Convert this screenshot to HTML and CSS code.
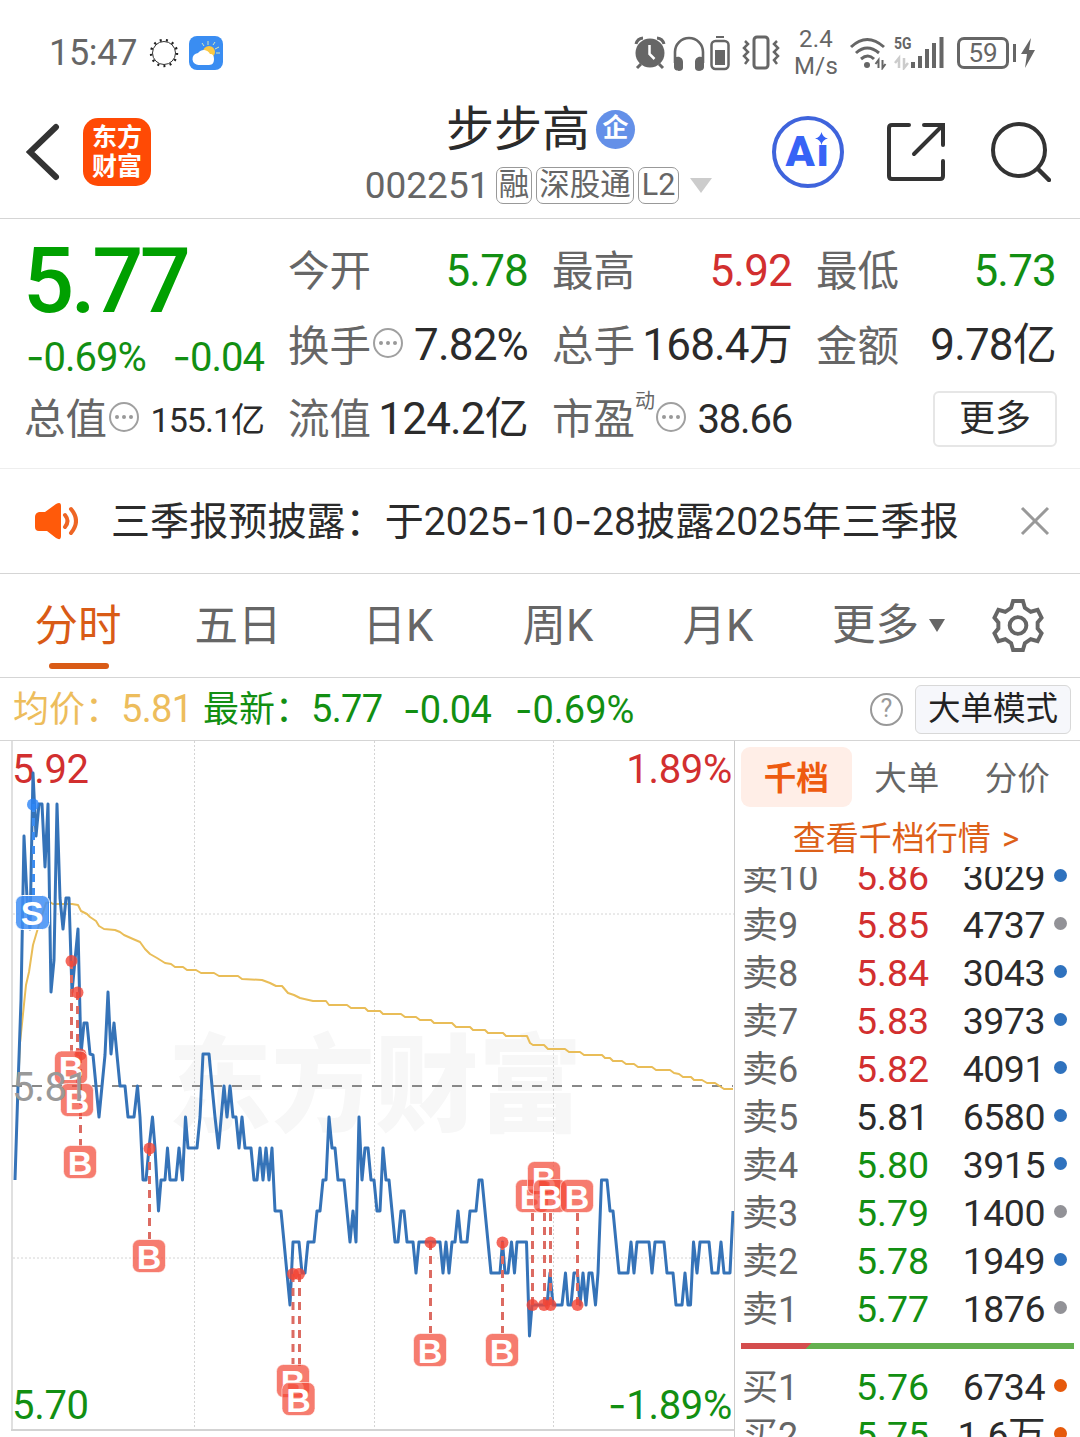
FILE: index.html
```
<!DOCTYPE html>
<html lang="zh-CN">
<head>
    <meta charset="UTF-8">
    <meta name="viewport" content="width=device-width, initial-scale=1.0">
    <title>步步高 002251</title>
    <link rel="stylesheet" href="styles.css">
</head>
<body>
    <div class="status-bar">
        <span class="time">15:47</span>
        <svg class="ring" viewBox="0 0 30 30"><circle cx="15" cy="15" r="11.5" fill="none" stroke="#333" stroke-width="1"/><circle cx="15" cy="15" r="13" fill="none" stroke="#222" stroke-width="2.4" stroke-dasharray="2 4.28"/></svg>
        <svg class="weather" viewBox="0 0 34 34">
            <rect width="34" height="34" rx="8" fill="#3a8df2"/>
            <path d="M19 5v4M13 7l2 3M26 6l-2 3M30 11l-4 2M31 17h-4" stroke="#d8e6b5" stroke-width="1"/>
            <circle cx="20" cy="16" r="6" fill="#fbc944"/>
            <path d="M10 29a6 6 0 0 1-1-12 7 7 0 0 1 12 1c3 0 4 2 4 5s-1 6-5 6z" fill="#fff"/>
        </svg>
        <div class="status-icons">
            <svg class="alarm" viewBox="0 0 32 34"><circle cx="16" cy="17" r="14.5" fill="#666"/><path d="M2 8a8 8 0 0 1 7-6M30 8a8 8 0 0 0-7-6M7 28l-4 4M25 28l4 4" stroke="#666" stroke-width="3" fill="none"/><path d="M15.5 9v9l5 5" stroke="#fff" stroke-width="2.5" fill="none"/></svg>
            <svg class="headphones" viewBox="0 0 32 36"><path d="M2 27V16a14 14 0 0 1 28 0v11" fill="none" stroke="#666" stroke-width="2.6"/><path d="M1 22c5-3 9 0 9 4v6c0 4-9 4-9-1zM31 22c-5-3-9 0-9 4v6c0 4 9 4 9-1z" fill="#666"/></svg>
            <svg class="device" viewBox="0 0 20 36"><path d="M6 1h8v2H6z" fill="#666"/><rect x="1.5" y="6" width="17" height="28" rx="4" fill="none" stroke="#666" stroke-width="2.5"/><rect x="5" y="15" width="10" height="15" fill="#666"/></svg>
            <svg class="vibrate" viewBox="0 0 38 36"><rect x="12" y="2" width="14" height="31" rx="3" fill="none" stroke="#666" stroke-width="3"/><path d="M3 6l3 3-4 4 4 4-4 4 4 4-3 4M35 6l-3 3 4 4-4 4 4 4-4 4 3 4" fill="none" stroke="#666" stroke-width="2.5"/></svg>
            <div class="speed"><span>2.4</span><span>M/s</span></div>
            <svg class="wifi" viewBox="0 0 38 34"><path d="M2 11q16-15 33 0M7 17q11-10 23 0M12 23q7-6 13 0" fill="none" stroke="#666" stroke-width="3"/><circle cx="18" cy="29" r="3" fill="#666"/><path d="M29.5 32v-8l-3 4M33.5 24v8l3-4" fill="none" stroke="#666" stroke-width="2"/></svg>
            <div class="network">
                <span>5G</span>
                <svg viewBox="0 0 52 34"><path d="M5 32v-10l-4 5M10 22v10l4-5" fill="none" stroke="#ccc" stroke-width="2.5"/><path d="M19 32v-6M26 32V20M33 32V13M40 32V7M47.5 32V1" stroke="#666" stroke-width="4"/></svg>
            </div>
            <div class="battery">59</div>
            <svg class="charging" viewBox="0 0 22 32"><path d="M1.5 7v18" stroke="#666" stroke-width="3"/><path d="M18 1L8 17h6l-2 14 10-18h-6z" fill="#666"/></svg>
        </div>
    </div>

    <header class="header">
        <div class="header-left">
            <svg class="back" viewBox="0 0 34 58"><path d="M30 4L4 29l26 25" fill="none" stroke="#333" stroke-width="6" stroke-linecap="round"/></svg>
            <div class="logo"><span>东方</span><span>财富</span></div>
        </div>
        <div class="header-title">
            <div class="stock-name">步步高<i class="badge">企</i></div>
            <div class="stock-code">
                <span class="code">002251</span>
                <span class="tag">融</span>
                <span class="tag">深股通</span>
                <span class="tag">L2</span>
                <i class="triangle"></i>
            </div>
        </div>
        <div class="header-right">
            <div class="ai"><b>Ai</b><svg viewBox="0 0 12 12"><path d="M6 0q1 5 6 6-5 1-6 6-1-5-6-6 5-1 6-6z" fill="#3763f6"/></svg></div>
            <svg class="share" viewBox="0 0 60 60"><path d="M23 3H6Q3 3 3 6v48q0 3 3 3h48q3 0 3-3V39M38 3h19v20M57 3L28 32" fill="none" stroke="#333" stroke-width="4" stroke-linecap="round"/></svg>
            <svg class="search" viewBox="0 0 60 60"><circle cx="28" cy="28" r="26" fill="none" stroke="#333" stroke-width="4"/><path d="M47 47l11 11" stroke="#333" stroke-width="4.5" stroke-linecap="round"/></svg>
        </div>
    </header>

    <section class="stats">
        <div class="price">
            <strong>5.77</strong>
            <div class="change green"><span><u>-</u>0.69%</span><span><u>-</u>0.04</span></div>
        </div>
        <div class="stat"><label>今开</label><span class="green">5.78</span></div>
        <div class="stat"><label>最高</label><span class="red">5.92</span></div>
        <div class="stat"><label>最低</label><span class="green">5.73</span></div>
        <div class="stat"><label>换手</label><i class="dots"></i><span>7.82%</span></div>
        <div class="stat"><label>总手</label><span>168.4万</span></div>
        <div class="stat"><label>金额</label><span>9.78亿</span></div>
        <div class="stat"><label>总值</label><i class="dots"></i><span class="small">155.1亿</span></div>
        <div class="stat"><label>流值</label><span>124.2亿</span></div>
        <div class="stat"><label>市盈</label><sup>动</sup><i class="dots"></i><span class="medium">38.66</span></div>
        <div class="stat"><button class="more">更多</button></div>
    </section>

    <div class="notice">
        <svg class="speaker" viewBox="0 0 44 38"><path d="M1 15q0-4 4-5h6L22 2q5-3 5 2v30q0 5-5 2l-9-7H5q-4 0-4-4z" fill="#ff5a0a"/><path d="M31 13q5 6 0 12M37 7q10 12 0 24" fill="none" stroke="#ee6524" stroke-width="4" stroke-linecap="round"/></svg>
        <span class="notice-text">三季报预披露：于2025<u>-</u>10<u>-</u>28披露2025年三季报</span>
        <svg class="close" viewBox="0 0 30 30"><path d="M2 2l26 26M28 2L2 28" stroke="#999" stroke-width="3"/></svg>
    </div>

    <nav class="tabs">
        <a class="tab active">分时</a>
        <a class="tab">五日</a>
        <a class="tab">日K</a>
        <a class="tab">周K</a>
        <a class="tab">月K</a>
        <a class="tab-more">更多<i></i></a>
        <svg class="gear" viewBox="0 0 52 54"><path d="M21 2h10l2 7 6 4 7-2 4 8-4 5v6l4 5-4 8-7-2-6 4-2 7H21l-2-7-6-4-7 2-4-8 4-5v-6l-4-5 4-8 7 2 6-4z" fill="none" stroke="#666" stroke-width="4"/><circle cx="26" cy="27" r="8.5" fill="none" stroke="#666" stroke-width="4"/></svg>
    </nav>

    <div class="quote">
        <span class="quote-avg">均价：<b>5.81</b></span>
        <span class="quote-last green">最新：<b>5.77</b></span>
        <b class="quote-diff green"><u>-</u>0.04</b>
        <b class="quote-pct green"><u>-</u>0.69%</b>
        <i class="help">?</i>
        <button class="mode">大单模式</button>
    </div>

    <main class="main">
        <svg class="chart" viewBox="0 741 734 696">
            <defs>
                <g id="buy">
                    <rect x="-16.5" y="-16.5" width="33" height="33" rx="7" class="buy-box"/>
                    <text y="12.5" class="mark">B</text>
                </g>
            </defs>
            <text x="168" y="1123" textLength="414" lengthAdjust="spacingAndGlyphs" class="watermark">东方财富</text>
            <path d="M194.5 741V1430M374.5 741V1430M553.5 741V1430M13 914H734M13 1258H734" class="grid"/>
            <path d="M12 741V1430" stroke="#e0e0e0" stroke-width="2"/>
            <path d="M11 1430H734" stroke="#d3d3d3" stroke-width="2"/>
            <path d="M12 1086H733" stroke="#888" stroke-width="2" stroke-dasharray="10 10"/>
            <text x="12" y="783" class="axis" fill="#d22f2f">5.92</text>
            <text x="732" y="783" class="axis end" fill="#d22f2f">1.89%</text>
            <text x="12" y="1419" class="axis" fill="#128f12">5.70</text>
            <text x="732" y="1419" class="axis end" fill="#128f12"><tspan class="minus">-</tspan>1.89%</text>
            <polyline class="avg-line" points="18,1090 20,1043 26,985 29,972 33,945 38,928 46,903 50,902 53,904 72,904 78,905 81,911 87,914 90,917 96,921 99,926 104,929 115,930 120,932 124,935 133,939 140,942 145,949 150,954 157,958 165,963 171,964 175,967 183,967 187,970 196,970 201,973 214,973 219,976 238,976 242,979 262,980 270,983 276,986 282,986 288,993 294,995 300,998 313,1001 326,1001 329,1005 347,1005 351,1008 365,1008 368,1011 380,1011 383,1014 401,1014 405,1017 416,1017 420,1020 431,1020 434,1023 452,1023 456,1027 470,1027 473,1030 485,1030 488,1033 503,1033 506,1036 527,1036 530,1043 533,1045 544,1045 548,1049 565,1049 569,1052 580,1052 584,1055 602,1055 605,1058 610,1058 613,1061 622,1061 626,1064 634,1064 638,1067 652,1067 656,1070 670,1070 674,1073 679,1074 683,1077 691,1077 694,1080 702,1080 707,1083 715,1083 724,1089 733,1089"/>
            <polyline class="price-line" points="15,1180 18,1086 21,1000 24,836 27,898 30,929 33,773 36,836 39,804 42,804 45,867 48,804 51,992 54,960 57,804 60,898 63,929 66,898 69,898 72,992 75,960 78,929 81,1054 84,1023 87,1023 90,1054 93,1055 96,1086 99,1117 102,1086 105,1055 108,992 111,1054 114,1023 117,1055 120,1086 125,1086 128,1117 134,1117 137.5,1086 140,1117 143,1180 146,1180 149,1148 152.5,1117 155,1148 158.5,1211 161,1180 165,1180 167.5,1148 170,1180 176,1180 179,1148 182.5,1180 185.5,1117 188,1148 197,1148 200,1117 203,1054 209,1054 212,1086 215,1117 218.5,1148 224,1086 227,1117 230,1086 233,1117 236,1117 239,1148 242,1117 245,1148 251,1148 254,1180 257,1180 260,1148 263,1180 266,1148 269,1180 272,1148 275,1211 281,1211 284,1242 290,1305 293,1242 299,1242 302,1273 305,1273 308,1242 314,1242 317,1211 320,1211 323,1180 326,1180 329,1117 332,1148 335,1148 338,1180 344,1180 347,1211 350,1242 353,1211 356,1242 359,1117 362,1180 365,1148 368,1148 371,1180 374,1180 377,1211 380,1211 383,1148 386,1180 389,1180 392,1211 395,1242 398,1242 401,1211 404,1211 407,1242 413,1242 416,1273 419,1242 440,1242 443,1273 446,1242 449,1273 452,1242 455,1242 458,1211 461,1242 467,1242 470,1211 476,1211 479,1180 482,1180 485,1211 488,1242 491,1273 500,1273 502.5,1242 505,1273 508,1273 511.5,1242 514.5,1273 517,1242 526.5,1242 529.5,1336 532,1305 547,1305 550,1273 553,1305 562,1305 565.5,1273 568,1305 571,1305 574,1273 577.5,1273 580,1305 583,1273 586,1305 589,1273 592,1273 595.5,1305 598,1273 601.5,1180 607,1180 610,1211 613,1211 616,1242 619,1273 628,1273 631,1242 634,1273 637,1242 649,1242 652,1273 655,1242 664,1242 667,1273 673,1273 676,1305 682,1305 685,1273 688,1305 690.5,1305 693.5,1242 697,1273 700,1242 709,1242 712,1273 718,1273 721,1242 724,1273 730,1273 733,1211"/>
            <!-- trade markers -->
            <path d="M33.5 804V896" stroke="#3b8cf0" stroke-width="3" stroke-dasharray="8 6"/>
            <circle cx="33" cy="804.5" r="6" fill="#2b83f6" fill-opacity=".8"/>
            <rect x="15.5" y="895.5" width="34" height="34" rx="7" fill="#3f8ef5" fill-opacity=".85" stroke="#fff"/>
            <text x="32" y="925" class="mark">S</text>
            <path class="buy-link" d="M71.5 961V1052M77.5 992V1083M80.5 1055V1146M149.5 1148V1239M293 1274V1364M299.5 1274V1382M430.5 1242V1333M502.5 1242V1333M532.5 1305V1212M544.5 1305V1212M550.5 1305V1212M577.5 1305V1212"/>
            <g class="buy-dots">
                <circle cx="71.5" cy="961" r="6"/>
                <circle cx="77.5" cy="992.5" r="6"/>
                <circle cx="80.5" cy="1054.5" r="6"/>
                <circle cx="149.5" cy="1148.5" r="6"/>
                <circle cx="293" cy="1274" r="6"/>
                <circle cx="299" cy="1274" r="6"/>
                <circle cx="430.5" cy="1242.5" r="6"/>
                <circle cx="502.5" cy="1242.5" r="6"/>
                <circle cx="532.5" cy="1305" r="6"/>
                <circle cx="544" cy="1305" r="6"/>
                <circle cx="550.5" cy="1305" r="6"/>
                <circle cx="577.5" cy="1305" r="6"/>
            </g>
            <use href="#buy" x="71" y="1067.5"/>
            <use href="#buy" x="77" y="1100"/>
            <use href="#buy" x="80" y="1162"/>
            <use href="#buy" x="149" y="1256"/>
            <use href="#buy" x="293" y="1381"/>
            <use href="#buy" x="298.5" y="1399"/>
            <use href="#buy" x="430" y="1350"/>
            <use href="#buy" x="502" y="1350"/>
            <use href="#buy" x="532" y="1196"/>
            <use href="#buy" x="544" y="1178"/>
            <use href="#buy" x="550" y="1196"/>
            <use href="#buy" x="577" y="1196"/>
            <text x="12" y="1101" class="axis" fill="#999">5.81</text>
        </svg>

        <aside class="book">
            <div class="book-tabs"><a class="active">千档</a><a>大单</a><a>分价</a></div>
            <a class="book-link">查看千档行情 &gt;</a>
            <div class="book-list">
                <div class="row first"><span>卖10</span><span class="red">5.86</span><span>3029</span><i class="blue"></i></div>
                <div class="row"><span>卖9</span><span class="red">5.85</span><span>4737</span><i></i></div>
                <div class="row"><span>卖8</span><span class="red">5.84</span><span>3043</span><i class="blue"></i></div>
                <div class="row"><span>卖7</span><span class="red">5.83</span><span>3973</span><i class="blue"></i></div>
                <div class="row"><span>卖6</span><span class="red">5.82</span><span>4091</span><i class="blue"></i></div>
                <div class="row"><span>卖5</span><span>5.81</span><span>6580</span><i class="blue"></i></div>
                <div class="row"><span>卖4</span><span class="green">5.80</span><span>3915</span><i class="blue"></i></div>
                <div class="row"><span>卖3</span><span class="green">5.79</span><span>1400</span><i></i></div>
                <div class="row"><span>卖2</span><span class="green">5.78</span><span>1949</span><i class="blue"></i></div>
                <div class="row"><span>卖1</span><span class="green">5.77</span><span>1876</span><i></i></div>
                <div class="ratio"></div>
                <div class="row"><span>买1</span><span class="green">5.76</span><span>6734</span><i class="orange"></i></div>
                <div class="row"><span>买2</span><span class="green">5.75</span><span>1.6万</span><i class="orange"></i></div>
            </div>
        </aside>
    </main>
</body>
</html>
```
FILE: styles.css
```
* {
    box-sizing: border-box;
}
body {
    margin: 0;
    width: 1080px;
    height: 1437px;
    overflow: hidden;
    background: #fff;
    color: #2b2b2b;
    font-family: Roboto, "Noto Sans CJK SC", sans-serif;
}
i {
    font-style: normal;
}
/* wider dash in front of falling numbers */
u,
.minus {
    font-family: Inter, sans-serif;
    text-decoration: none;
}
svg {
    display: block;
    flex: none;
}
.green {
    color: #128f12;
}
.red {
    color: #d22f2f;
}

/* Status bar */
.status-bar {
    display: flex;
    align-items: center;
    height: 105px;
    padding: 0 46px 0 49px;
    color: #666;
}
.time {
    width: 100px;
    font-size: 36px;
    letter-spacing: -0.3px;
}
.ring {
    width: 30px;
    height: 30px;
}
.weather {
    width: 34px;
    height: 34px;
    margin-left: 10px;
}
.status-icons {
    display: flex;
    align-items: center;
    margin-left: auto;
}
.alarm {
    width: 32px;
    height: 34px;
}
.headphones {
    width: 32px;
    height: 36px;
    margin: 2px 0 0 7px;
}
.device {
    width: 20px;
    height: 36px;
    margin-left: 5px;
}
.vibrate {
    width: 38px;
    height: 36px;
    margin-left: 12px;
}
.speed {
    display: flex;
    flex-direction: column;
    align-items: center;
    width: 44px;
    margin-left: 14px;
    font-size: 24px;
    line-height: 27px;
    letter-spacing: 0.3px;
}
.wifi {
    width: 38px;
    height: 34px;
    margin-left: 11px;
}
.network {
    position: relative;
    margin-left: 7px;
}
.network svg {
    width: 52px;
    height: 34px;
}
.network span {
    position: absolute;
    top: -1px;
    left: 0;
    font-size: 17px;
    font-weight: 700;
    line-height: 17px;
    transform: scaleX(0.82);
    transform-origin: left;
}
.battery {
    width: 52px;
    height: 32px;
    margin-left: 11px;
    border: 3px solid #666;
    border-radius: 7px;
    font-size: 26px;
    line-height: 27px;
    text-align: center;
}
.charging {
    width: 22px;
    height: 32px;
    margin-left: 4px;
    margin-right: -1px;
}

/* Header */
.header {
    display: grid;
    grid-template-columns: 1fr auto 1fr;
    height: 114px;
    padding: 0 29px 0 26px;
    border-bottom: 1px solid #d5d5d5;
}
.header-left,
.header-right {
    display: flex;
    align-items: center;
    height: 93px;
}
.header-right {
    justify-content: flex-end;
}
.back {
    width: 34px;
    height: 58px;
}
.logo {
    display: flex;
    flex-direction: column;
    align-items: center;
    justify-content: center;
    width: 68px;
    height: 68px;
    margin-left: 23px;
    border-radius: 15px;
    background: #ff4a05;
    color: #fff;
    font-size: 25px;
    font-weight: 700;
    line-height: 29px;
}
.stock-name {
    display: flex;
    align-items: center;
    justify-content: center;
    height: 49px;
    padding-left: 4px;
    font-size: 48px;
    line-height: 51px;
}
.badge {
    width: 39px;
    height: 39px;
    margin-left: 6px;
    border-radius: 50%;
    background: #6490e8;
    color: #fff;
    font-size: 26px;
    font-weight: 700;
    line-height: 37px;
    text-align: center;
}
.stock-code {
    display: flex;
    align-items: center;
    height: 36px;
    margin-top: 13px;
    color: #666;
}
.code {
    width: 131px;
    font-size: 37px;
    letter-spacing: 0;
}
.tag {
    height: 37px;
    padding: 0 2px;
    margin-right: 4px;
    border: 1.5px solid #999;
    border-radius: 7px;
    font-size: 30.5px;
    line-height: 34px;
}
.tag:nth-child(4) {
    padding: 0 3px;
}
.triangle {
    margin-left: 7px;
    border: 11px solid transparent;
    border-top: 15px solid #ccc;
    border-bottom: 0;
}
.ai {
    position: relative;
    width: 72px;
    height: 72px;
    border: 4px solid #3f64dc;
    border-radius: 50%;
    color: #3763f6;
    font-size: 43px;
    line-height: 62px;
    text-align: center;
}
.ai b {
    font-weight: 900;
    letter-spacing: 2px;
}
.ai svg {
    position: absolute;
    top: 12px;
    right: 12px;
    width: 13px;
    height: 13px;
    background: #fff;
}
.share {
    width: 60px;
    height: 60px;
    margin-left: 42px;
}
.search {
    width: 60px;
    height: 60px;
    margin-left: 45px;
}

/* Key numbers */
.stats {
    display: grid;
    grid-template-columns: repeat(4, 238px);
    grid-template-rows: 75px 74px 73px;
    column-gap: 26px;
    height: 250px;
    padding: 14px 26px 0;
    border-bottom: 1px solid #eee;
}
.price {
    grid-row: span 2;
}
.price strong {
    display: block;
    height: 94px;
    color: #00a000;
    font-size: 90px;
    font-weight: 500;
    line-height: 97px;
    letter-spacing: -3.5px;
    margin-left: -3px;
}
.change {
    display: flex;
    justify-content: space-between;
    font-size: 40px;
    line-height: 60px;
    letter-spacing: -1px;
}
.stat {
    display: flex;
    align-items: center;
    font-size: 44px;
    letter-spacing: -0.8px;
    line-height: 60px;
    white-space: nowrap;
}
.stat label {
    margin: 3px 0 0 -2px;
    color: #666;
    font-size: 41.5px;
    letter-spacing: 0;
}
.stat span,
.more {
    margin-left: auto;
}
.stat .medium {
    margin-top: 3px;
    font-size: 40px;
    letter-spacing: -1.2px;
}
.stat .small {
    margin-top: 3px;
    font-size: 34px;
    letter-spacing: -1px;
}
.stat sup {
    margin-bottom: 36px;
    color: #666;
    font-size: 20px;
    line-height: 24px;
    vertical-align: baseline;
}
.dots {
    position: relative;
    width: 30px;
    height: 30px;
    margin: -4px 0 0 2px;
    border: 2.5px solid #a0a0a0;
    border-radius: 50%;
}
.dots::before {
    content: "";
    position: absolute;
    top: 11px;
    left: 10.5px;
    width: 4px;
    height: 4px;
    border-radius: 50%;
    background: #999;
    box-shadow: -7px 0 #999, 7px 0 #999;
}
.more {
    width: 124px;
    height: 56px;
    margin-right: -1px;
    border: 2px solid #e6e6e6;
    border-radius: 6px;
    background: #fff;
    color: #2b2b2b;
    font: 36px/50px Roboto, "Noto Sans CJK SC", sans-serif;
}

/* Notice */
.notice {
    display: flex;
    align-items: center;
    height: 105px;
    padding: 0 30px 0 34px;
    border-bottom: 1px solid #d5d5d5;
}
.speaker {
    width: 44px;
    height: 38px;
}
.notice-text {
    margin-left: 33px;
    font-size: 39px;
    line-height: 60px;
    letter-spacing: 0.1px;
    white-space: nowrap;
}
.close {
    width: 30px;
    height: 30px;
    margin-left: auto;
}

/* Period tabs */
.tabs {
    display: flex;
    align-items: center;
    height: 104px;
    border-bottom: 1px solid #d5d5d5;
    color: #666;
    font-size: 43.5px;
    line-height: 105px;
}
.tab {
    position: relative;
    width: 160px;
    height: 103px;
    text-align: center;
    left: -2px;
}
.tab.active {
    color: #d95b16;
}
.tab.active::after {
    content: "";
    position: absolute;
    left: 51px;
    bottom: 8px;
    width: 60px;
    height: 6px;
    border-radius: 3px;
    background: #d95b16;
}
.tab-more {
    display: flex;
    align-items: center;
    margin-left: 32px;
}
.tab-more i {
    margin-left: 10px;
    border: 8px solid transparent;
    border-top: 13px solid #666;
    border-bottom: 0;
}
.gear {
    width: 52px;
    height: 53px;
    margin-left: 47px;
}

/* Quote line */
.quote {
    display: flex;
    align-items: center;
    height: 63px;
    padding: 0 9px 0 13px;
    border-bottom: 1px solid #d5d5d5;
    font-size: 36px;
    line-height: 62px;
    white-space: nowrap;
}
.quote b {
    font-size: 38px;
    font-weight: 400;
    letter-spacing: -0.7px;
}
.quote-avg {
    width: 190px;
    color: #edbd5c;
}
.quote-last {
    width: 200px;
}
.quote-diff {
    width: 112px;
}
.quote .quote-pct {
    letter-spacing: 0;
}
.help {
    width: 33px;
    height: 33px;
    margin-left: auto;
    border: 2.5px solid #999;
    border-radius: 50%;
    color: #999;
    font-size: 25px;
    line-height: 28px;
    text-align: center;
}
.mode {
    width: 156px;
    height: 49px;
    margin-left: 12px;
    padding: 0;
    border: 1px solid #d8d8d8;
    border-radius: 6px;
    background: #f6f7fb;
    color: #222;
    font: 32.5px/47px Roboto, "Noto Sans CJK SC", sans-serif;
}

/* Chart */
.main {
    display: flex;
    height: 696px;
}
.chart {
    width: 734px;
    height: 696px;
}
.watermark {
    fill: #f7f7f7;
    font-size: 106px;
    font-weight: 900;
}
.grid {
    stroke: #d4d4d4;
    stroke-dasharray: 2 2;
}
.axis {
    font-size: 40px;
    letter-spacing: -0.3px;
}
.axis.end {
    text-anchor: end;
}
.avg-line,
.price-line {
    fill: none;
    stroke-linejoin: round;
}
.avg-line {
    stroke: #e9bd58;
    stroke-width: 2;
}
.price-line {
    stroke: #3573b8;
    stroke-width: 3;
}
.mark {
    fill: #fff;
    font-family: "Liberation Sans", Arial, sans-serif;
    font-size: 34px;
    font-weight: 700;
    text-anchor: middle;
}
.buy-box {
    fill: #f34a37;
    fill-opacity: 0.72;
    stroke: #fff;
    stroke-opacity: 0.6;
}
.buy-link {
    stroke: #dc6b62;
    stroke-width: 3;
    stroke-dasharray: 8 6;
}
.buy-dots {
    fill: #f24334;
    fill-opacity: 0.8;
}

/* Order book */
.book {
    display: flex;
    flex-direction: column;
    width: 346px;
    border-left: 1px solid #ccc;
}
.book-tabs {
    display: flex;
    margin: 6px 0 0 6px;
    color: #666;
    font-size: 32.5px;
    line-height: 64px;
    text-align: center;
}
.book-tabs a {
    width: 110.5px;
    height: 60px;
}
.book-tabs .active {
    border-radius: 9px;
    background: #ffeee7;
    color: #ee5b10;
    font-weight: 700;
}
.book-link {
    height: 60px;
    padding-right: 3px;
    color: #dd6019;
    font-size: 33px;
    line-height: 63px;
    text-align: center;
    word-spacing: 3px;
}
.book-list {
    flex: 1;
    overflow: hidden;
}
.row {
    display: grid;
    grid-template-columns: 114px 97px 92px 13px;
    align-items: baseline;
    height: 48px;
    padding-left: 7px;
    font-size: 37.5px;
    line-height: 48px;
    white-space: nowrap;
}
.row.first {
    margin-top: -14px;
}
.row span:first-child {
    color: #666;
    font-size: 36px;
}
.row span:nth-child(3) {
    text-align: right;
    letter-spacing: -0.5px;
}
.row i {
    align-self: center;
    width: 13px;
    height: 13px;
    margin: -4px 0 0 9px;
    border-radius: 50%;
    background: #929297;
}
.row .blue {
    background: #2f72be;
}
.row .orange {
    background: #e6590b;
}
.ratio {
    width: 333px;
    height: 6px;
    margin: 10px 0 14px 6px;
    background: linear-gradient(135deg, #d44d4d 50px, #64b04f 50px);
}
```
